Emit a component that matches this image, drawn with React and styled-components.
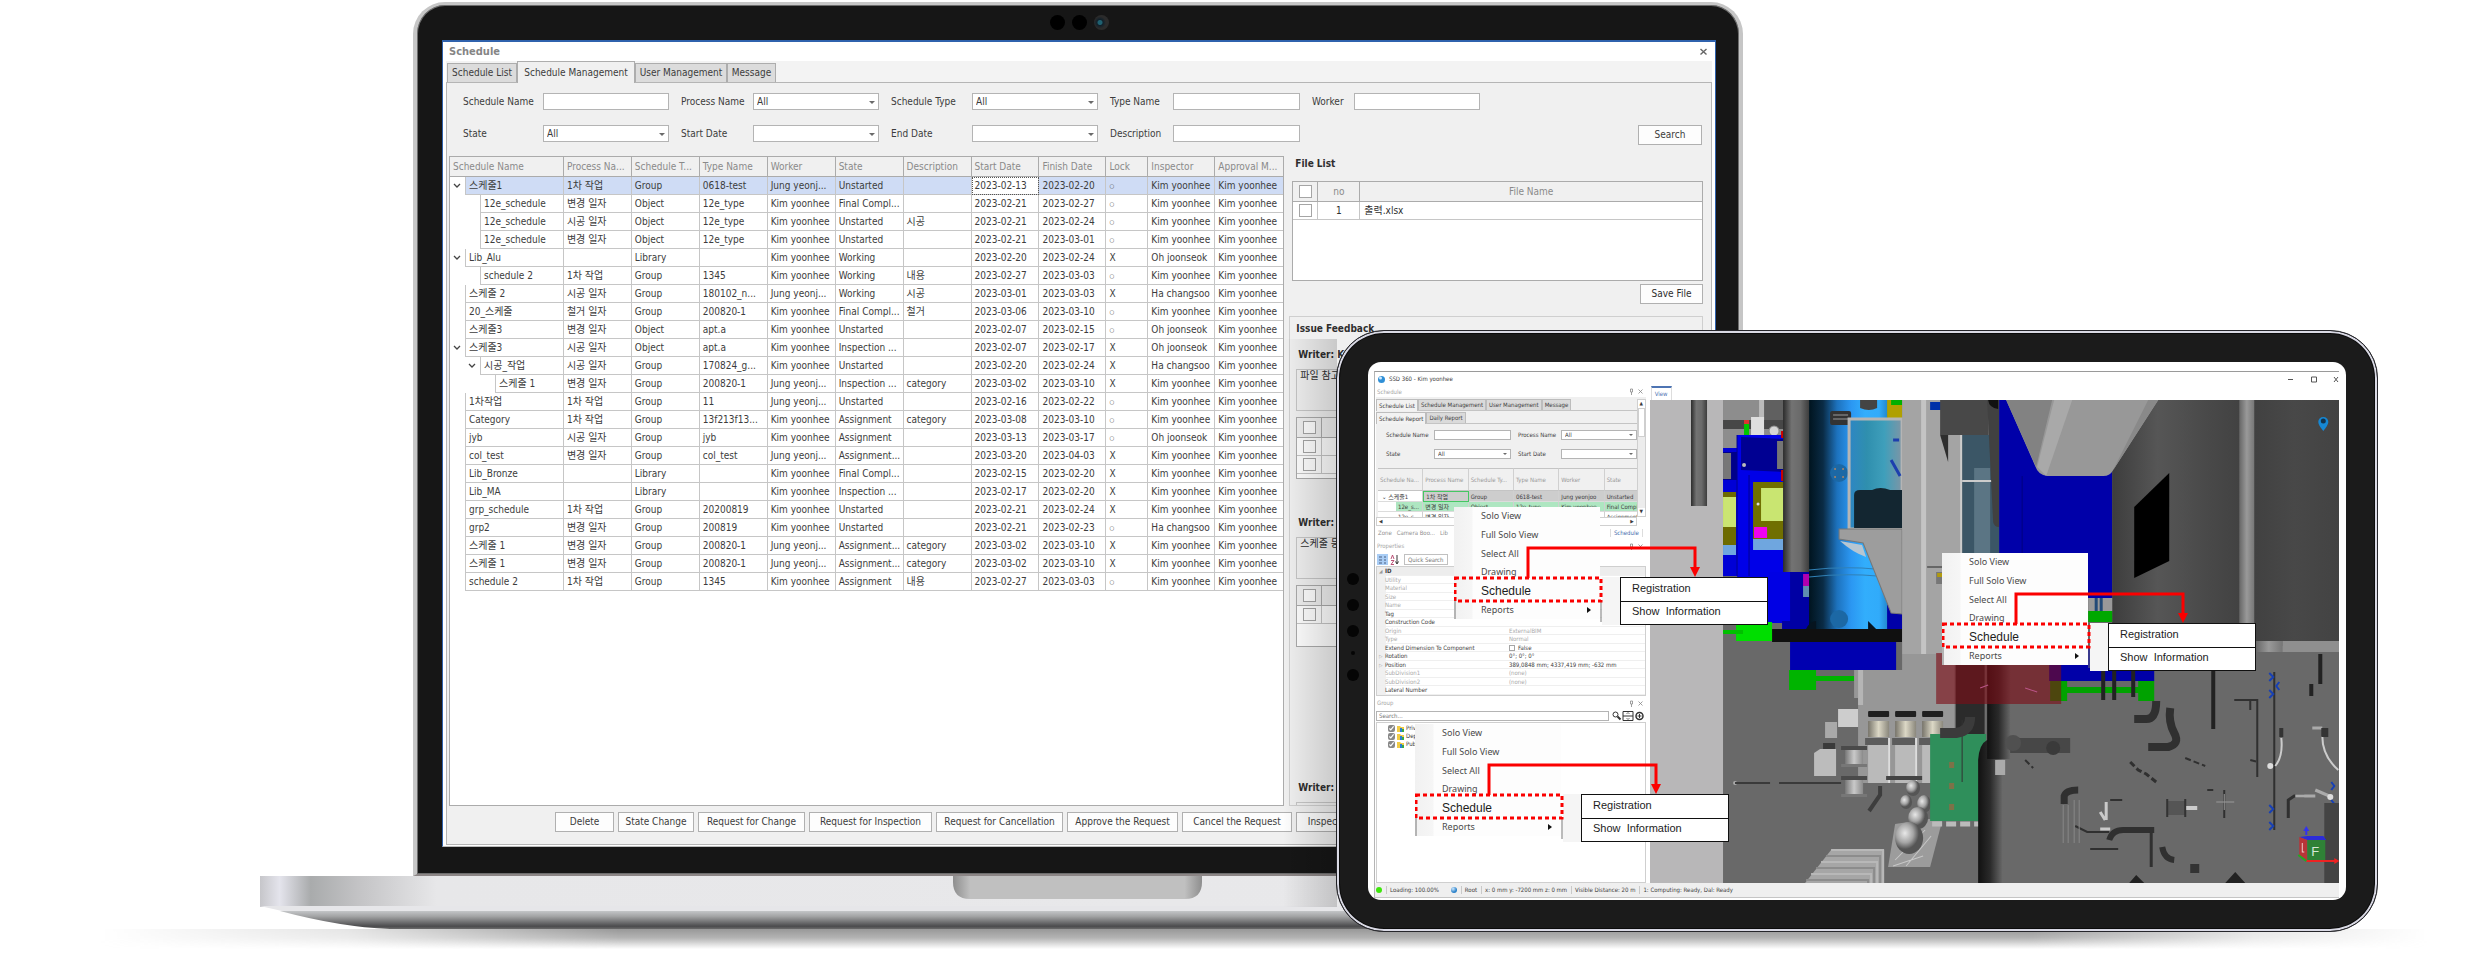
import React, { useId } from "react";
import styled, { createGlobalStyle } from "styled-components";

const uiFont = `"DejaVu Sans Condensed", "DejaVu Sans", "Noto Sans CJK KR", sans-serif`;

const GlobalStyle = createGlobalStyle`
  *, *::before, *::after { box-sizing: border-box; }
  body { margin: 0; background: #fff; color: #3c3c3c; font: 10px/16px ${uiFont}; }
  button, input, select { font: inherit; color: inherit; margin: 0; }
`;

/* ---------- stage ---------- */

const Stage = styled.main`
  display: grid;
  grid-template-columns: 260fr 153fr 923fr 407fr 153fr 482fr 100fr;
  grid-template-rows: auto auto 26px;
  overflow: hidden;
`;

const FloorShadow = styled.div`
  grid-column: 1 / -1;
  grid-row: 3;
  height: 20px;
  background: linear-gradient(#989898, #b4b4b4 45%, rgba(255, 255, 255, 0));
  mask-image: linear-gradient(90deg, transparent 4%, rgba(0, 0, 0, 0.25) 14%, #000 25%, #000 82%, rgba(0, 0, 0, 0.25) 91%, transparent 98%);
`;

/* ---------- laptop ---------- */

const Lid = styled.section`
  grid-column: 3 / 5;
  grid-row: 1;
  min-width: 0;
  margin-top: 2px;
  padding: 0 23px 27px 25px;
  background: #161616;
  border: 4px solid #c6c6c6;
  border-top-width: 3px;
  border-bottom: 2px solid #8c8686;
  border-radius: 32px 32px 0 0;
  box-shadow: inset 0 0 0 1px #6d6d6d;
`;

const CameraBar = styled.div`
  height: 35px;
  display: flex;
  align-items: center;
  justify-content: center;
  gap: 7px;
`;

const Lens = styled.span`
  width: 15px;
  height: 15px;
  border-radius: 50%;
  background: ${(p) => (p.$glass ? "radial-gradient(circle at 40% 50%, #1f6070 0 2px, #10202a 3px, #2b2b2b 6px)" : "#000")};
`;

const Screen = styled.div`
  background: #fff;
  border: 1px solid #2f62ad;
  border-top-width: 2px;
  border-bottom-color: #bbb;
  padding: 0 3px 1px;
`;

const WindowTitle = styled.header`
  height: 19px;
  padding: 0 4px 0 3px;
  display: flex;
  align-items: center;
  justify-content: space-between;
  h1 { margin: 0; font-size: 11px; line-height: 19px; color: #858585; }
`;

const CloseButton = styled.button`
  border: 0;
  padding: 0;
  width: 9px;
  height: 9px;
  background: none;
  display: flex;
`;

const TabStrip = styled.nav`
  display: flex;
  align-items: flex-end;
  height: 21px;
  padding-left: 1px;
  background: #f3f3f3;
`;

const Tab = styled.button`
  height: ${(p) => (p.$active ? 22 : 19)}px;
  width: ${(p) => p.$w}px;
  padding: 0;
  margin-bottom: ${(p) => (p.$active ? -1 : 0)}px;
  background: ${(p) => (p.$active ? "#f0f0f0" : "#dcdcdc")};
  border: 1px solid #adadad;
  border-bottom: 0;
  white-space: nowrap;
  z-index: 1;
`;

const TabPanel = styled.div`
  border: 1px solid #b5b5b5;
  background: #f0f0f0;
  overflow: hidden;
`;

const Filters = styled.form`
  display: grid;
  grid-template-columns: 80px 126px 84px 126px 93px 126px 75px 127px 54px 126px 1fr;
  row-gap: 15px;
  align-items: start;
  padding: 10px 9px 11px 16px;
`;

const FieldLabel = styled.label`
  line-height: 17px;
  padding-left: ${(p) => (p.$first ? 0 : 12)}px;
  white-space: nowrap;
`;

const TextBox = styled.input`
  width: 100%;
  height: ${(p) => p.$h || 17}px;
  border: 1px solid #b4b4b4;
  background: #fff;
  padding: 0 3px;
  outline: 0;
  border-radius: 0;
`;

const SelectWrap = styled.span`
  position: relative;
  display: flex;
  width: 100%;
  &::after {
    content: "";
    position: absolute;
    right: 4px;
    top: 50%;
    margin-top: -1px;
    border: ${(p) => (p.$small ? 2 : 3)}px solid transparent;
    border-top-color: #6a6a6a;
    border-bottom: 0;
  }
  select {
    appearance: none;
    width: 100%;
    height: ${(p) => (p.$small ? 10 : 17)}px;
    border: 1px solid #b4b4b4;
    border-radius: 0;
    background: #fff;
    padding: 0 3px;
  }
`;

const SearchSlot = styled.div`
  grid-column: 11;
  grid-row: 2;
  justify-self: end;
`;

const PushButton = styled.button`
  height: 20px;
  width: ${(p) => p.$w}px;
  flex: none;
  padding: 0;
  background: #fdfdfd;
  border: 1px solid #b0b0b0;
  white-space: nowrap;
`;

const Workspace = styled.div`
  display: grid;
  grid-template-columns: minmax(0, 836fr) minmax(0, 427fr);
  min-height: 650px;
  padding-left: 2px;
`;

const TreePane = styled.div`
  background: #fff;
  border: 1px solid #ababab;
  overflow: hidden;
`;

const TreeTable = styled.table`
  width: 100%;
  table-layout: fixed;
  border-spacing: 0;
  th, td {
    padding: 0 0 0 3px;
    text-align: left;
    font-weight: normal;
    overflow: hidden;
    text-overflow: ellipsis;
    white-space: nowrap;
    border-right: 1px solid #c6c6c6;
    border-bottom: 1px solid #c6c6c6;
  }
  th { height: 20px; background: #f0f0f0; color: #8a8a8a; border-color: #ababab; }
  td { height: 18px; }
  th:last-child, td:last-child { border-right: 0; }
`;

const TreeRow = styled.tr`
  background: ${(p) => (p.$selected ? "#cfdcf5" : "#fff")};
`;

const FocusCell = styled.td`
  background: #fff;
  outline: 1px dotted #555;
  outline-offset: -1px;
`;

const LockCell = styled.td`
  font-size: ${(p) => (p.$ring ? 6 : 10)}px;
`;

const NameCell = styled.td`
  && { padding: 0; border-bottom: 0; }
  background: #fff;
  > div { display: flex; height: 18px; }
`;

const Indent = styled.span`
  flex: none;
  width: ${(p) => 15 + p.$level * 15}px;
  display: flex;
  align-items: center;
  justify-content: flex-end;
  padding-right: 4px;
`;

const NameText = styled.span`
  flex: 1;
  min-width: 0;
  line-height: 17px;
  padding-left: 3px;
  border-left: 1px solid #c6c6c6;
  border-bottom: 1px solid #c6c6c6;
  background: ${(p) => (p.$selected ? "#cfdcf5" : "#fff")};
`;

const SidePane = styled.aside`
  padding: 0 8px 0 5px;
  display: flex;
  flex-direction: column;
  color: #2e2e2e;
`;

const FileSection = styled.section`
  padding-left: 3px;
  display: flex;
  flex-direction: column;
  align-items: flex-end;
  gap: 3px;
  h2 { width: 100%; margin: 0; height: 22px; padding-left: 3px; font-size: 10px; line-height: 16px; }
`;

const FileBox = styled.div`
  width: 100%;
  height: ${(p) => p.$h}px;
  border: 1px solid #ababab;
  background: #fff;
`;

const FileTable = styled.table`
  width: 100%;
  table-layout: fixed;
  border-spacing: 0;
  th, td { padding: 0; height: 18px; border-right: 1px solid #c6c6c6; border-bottom: 1px solid #c6c6c6; font-weight: normal; text-align: center; line-height: 16px; }
  th { height: 20px; background: #f0f0f0; color: #8a8a8a; border-color: #ababab; }
  td:last-child { text-align: left; padding-left: 4px; }
  th:last-child, td:last-child { border-right: 0; }
`;

const Tick = styled.input.attrs({ type: "checkbox" })`
  appearance: none;
  display: block;
  width: ${(p) => p.$s || 13}px;
  height: ${(p) => p.$s || 13}px;
  margin: 0 auto;
  border: 1px solid #a5a5a5;
  background: #fff;
`;

const IssuePanel = styled.section`
  flex: 1 0 0;
  min-height: 0;
  margin-top: 12px;
  padding: 4px 8px 0 6px;
  border: 1px solid #cfcfcf;
  overflow: hidden;
  h2 { margin: 0 0 10px; font-size: 10px; line-height: 16px; }
`;

const Issue = styled.article`
  min-height: ${(p) => p.$h}px;
  h3 { margin: 0 0 6px 2px; font-size: 10px; line-height: 16px; }
  p { margin: 0 0 6px; height: 42px; padding-left: 3px; border: 1px solid #c6c6c6; line-height: 12px; }
`;

const ActionBar = styled.footer`
  display: flex;
  gap: 4px;
  padding: 6px 0 12px 108px;
`;

const BaseArt = styled.svg`
  grid-column: 2 / 6;
  grid-row: 2;
  display: block;
  width: 100%;
  height: 53px;
`;

/* ---------- tablet ---------- */

const Tablet = styled.section`
  grid-column: 4 / 7;
  grid-row: 1 / 4;
  align-self: start;
  position: relative;
  z-index: 2;
  min-width: 0;
  margin-top: 330px;
  padding: 31px 31px 31px 31px;
  background: #1b1b1b;
  border: 1px solid #26262b;
  border-radius: 48px;
  box-shadow: inset 0 0 0 2px #d9d9e4, inset 0 0 0 3px #0b0b0b;
  font-size: 6px;
  line-height: 8px;
  &::before {
    content: "";
    position: absolute;
    z-index: -1;
    left: -54px;
    top: 8px;
    bottom: 24px;
    width: 54px;
    background: linear-gradient(90deg, rgba(0, 0, 0, 0), rgba(0, 0, 0, 0.16));
  }
`;

const Sensors = styled.div`
  position: absolute;
  left: 10px;
  top: 242px;
  display: flex;
  flex-direction: column;
  align-items: center;
  gap: 14px;
  span { width: 12px; height: 12px; border-radius: 50%; background: #050505; }
  span:nth-child(4) { width: 4px; height: 4px; }
`;

const TabletScreen = styled.div`
  background: #fff;
  border-radius: 13px;
  padding: 9px 7px 2px 6px;
`;

const AppWindow = styled.div`
  position: relative;
  border-top: 1px solid #9a9a9a;
  border-left: 1px solid #b5b5b5;
  border-bottom: 1px solid #c5c5c5;
`;

const AppTitle = styled.header`
  display: flex;
  align-items: center;
  gap: 4px;
  height: 14px;
  padding: 0 0 0 3px;
  span { flex: 1; }
  svg:last-child { flex: none; }
`;

const AppMain = styled.div`
  display: grid;
  grid-template-columns: minmax(0, 275fr) minmax(0, 690fr);
`;

const Dock = styled.div`
  padding: 0 4px 0 1px;
  min-width: 0;
`;

const DockTitle = styled.div`
  display: flex;
  justify-content: space-between;
  align-items: center;
  height: ${(p) => p.$h}px;
  padding: 0 3px 0 1px;
  color: #a6a6a6;
  svg { flex: none; }
`;

const SchedPane = styled.div`
  display: flex;
  height: 120px;
  background: #f0f0f0;
`;

const SchedContent = styled.div`
  flex: 1;
  min-width: 0;
  overflow: hidden;
`;

const SmallTabs = styled.nav`
  display: flex;
  align-items: flex-end;
  height: ${(p) => p.$h}px;
  border-bottom: 1px solid #c4c4c4;
`;

const SmallTab = styled.button`
  height: ${(p) => (p.$active ? 12 : 11)}px;
  padding: 0 2px;
  margin-bottom: ${(p) => (p.$active ? -1 : 0)}px;
  border: 1px solid #bdbdbd;
  border-bottom: 0;
  background: ${(p) => (p.$active ? "#f2f2f2" : "#dadada")};
  white-space: nowrap;
`;

const SmallFilters = styled.form`
  display: grid;
  grid-template-columns: 48px 77px 50px 76px;
  row-gap: 9px;
  align-items: center;
  padding: 6px 0 9px 10px;
  label { white-space: nowrap; }
  label:nth-of-type(even) { padding-left: 7px; }
`;

const SmallTable = styled.table`
  width: 272px;
  margin-left: 2px;
  table-layout: fixed;
  border-spacing: 0;
  background: #fff;
  th, td { padding: 0 0 0 2px; text-align: left; font-weight: normal; overflow: hidden; text-overflow: ellipsis; white-space: nowrap; border-right: 1px solid #d0d0d0; }
  th { height: 23px; background: #f0f0f0; color: #999; border-top: 1px solid #c4c4c4; border-bottom: 1px solid #c4c4c4; }
  td { height: 10px; line-height: 9px; border-bottom: 1px solid #dcdcdc; }
`;

const rowTone = { sel: "#cdcdcd", done: "#aee6c1", plain: "#fff" };
const SmallRow = styled.tr`
  background: ${(p) => rowTone[p.$tone]};
  td:first-child { background: ${(p) => (p.$tone === "done" ? "linear-gradient(90deg, #fff 18px, #aee6c1 18px)" : "#fff")}; padding-left: ${(p) => (p.$tone === "sel" ? 4 : 20)}px; }
  td:nth-child(2) { ${(p) => p.$tone === "sel" && "border: 1px solid #45c763;"} }
`;

const ScrollV = styled.div`
  width: 9px;
  margin-top: 2px;
  background: #ececec;
  border: 1px solid #cfcfcf;
  display: flex;
  flex-direction: column;
  justify-content: space-between;
  span { height: 8px; background: #fff; text-align: center; font-size: 5px; line-height: 7px; }
  i { height: 29px; background: #fff; border: 1px solid #cfcfcf; margin-bottom: auto; }
`;

const ScrollH = styled.div`
  display: flex;
  justify-content: space-between;
  height: 9px;
  margin-right: 9px;
  background: #fff;
  border: 1px solid #d0d0d0;
  font-size: 5px;
  line-height: 7px;
  padding: 0 2px;
`;

const DockTabs = styled.div`
  display: flex;
  align-items: center;
  gap: 5px;
  height: 14px;
  padding: 0 3px 0 2px;
  color: #8f8f8f;
  a { margin-left: auto; color: #3f6cab; text-decoration: none; padding: 0 3px; border: solid #ddd; border-width: 0 1px; }
`;

const PropTools = styled.div`
  display: flex;
  align-items: center;
  gap: 5px;
  height: 14px;
  padding-left: 1px;
  input { width: 44px; height: 11px; padding: 0 3px; border: 1px solid #c0c0c0; }
`;

const PropGrid = styled.dl`
  margin: 0;
  height: 130px;
  display: grid;
  grid-template-rows: repeat(15, 1fr);
  border: 1px solid #cfcfcf;
  background: linear-gradient(90deg, #f0f0f0 9px, #fff 9px);
`;

const PropLine = styled.div`
  display: grid;
  grid-template-columns: 8px 122px 1fr;
  align-items: center;
  min-height: 0;
  border-bottom: 1px solid #efefef;
  color: ${(p) => (p.$dim ? "#a9a9a9" : "#3c3c3c")};
  background: ${(p) => (p.$head ? "#ededed" : "none")};
  font-weight: ${(p) => (p.$head ? "bold" : "normal")};
  dt, dd { margin: 0; line-height: 8px; white-space: nowrap; }
  dt { grid-column: 2; }
  dd { display: flex; align-items: center; gap: 3px; padding-left: 2px; }
  > i { font-style: normal; font-size: 5px; line-height: 8px; padding-left: 2px; color: #999; }
  input { margin: 0; }
`;

const GroupSearch = styled.div`
  display: flex;
  align-items: center;
  gap: 3px;
  height: 12px;
  padding: 0 2px 1px 0;
  input { flex: 1; min-width: 0; height: 10px; border: 1px solid #b4b4b4; padding: 0 2px; }
  svg { flex: none; }
`;

const GroupTree = styled.ul`
  height: 161px;
  margin: 0;
  padding: 1px 0 0 11px;
  list-style: none;
  border: 1px solid #cfcfcf;
  li { display: flex; align-items: center; gap: 2px; height: 8px; }
  input { margin: 0; width: 7px; height: 7px; accent-color: #888; }
`;

const ViewPane = styled.div`
  display: flex;
  flex-direction: column;
  min-width: 0;
`;

const ViewTab = styled.button`
  align-self: flex-start;
  height: 14px;
  margin-left: 1px;
  padding: 0 3px;
  border: 1px solid #ddd;
  border-width: 0 1px;
  border-top: 2px solid #4d74b3;
  background: #fff;
  color: #4d74b3;
`;

const Scene = styled.svg`
  display: block;
  width: 100%;
  height: 483px;
`;

const StatusBar = styled.footer`
  display: flex;
  align-items: center;
  height: 14px;
  background: #efefef;
  padding-left: 1px;
  white-space: nowrap;
  span { padding: 0 4px 0 3px; border-left: 1px solid #c9c9c9; }
`;

const Orb = styled.i`
  width: 6px;
  height: 6px;
  margin-right: 4px;
  border-radius: 50%;
  background: ${(p) => (p.$c === "green" ? "#3ee60c" : "radial-gradient(circle at 35% 30%, #cfe9ff, #2c82c9 60%)")};
`;

/* context menu with its sub menu, floating over the application */
const Callout = styled.div`
  position: absolute;
  left: ${(p) => p.$x}px;
  top: ${(p) => p.$y}px;
  width: 314px;
  height: 118px;
  > svg { position: absolute; inset: 0; }
`;

const Menu = styled.div`
  width: 146px;
  height: 112px;
  display: grid;
  grid-template-rows: repeat(6, 1fr);
  background: linear-gradient(90deg, #f1f1f1, #f6f6f6 18px, #fdfdfd 19px);
`;

const MenuItem = styled.button`
  display: flex;
  align-items: center;
  justify-content: space-between;
  border: 0;
  padding: 0 9px 0 27px;
  background: none;
  text-align: left;
  color: ${(p) => (p.$strong ? "#1c1c1c" : "#4a4a4a")};
  font: ${(p) => (p.$strong ? `12px/18px "Liberation Sans", sans-serif` : `9px/18px "Noto Sans", sans-serif`)};
`;

const SubMenu = styled.div`
  position: absolute;
  left: 166px;
  top: 70px;
  width: 148px;
  border: 1px solid #111;
  background: #fff;
  box-shadow: -18px 0 0 #f5f5f5;
  button {
    display: block;
    width: 100%;
    height: 23px;
    border: 0;
    padding: 0 0 3px 11px;
    background: none;
    text-align: left;
    color: #1c1c1c;
    font: 11px/19px "Liberation Sans", sans-serif;
  }
  button + button { border-top: 1px solid #111; }
`;

/* ---------- data ---------- */

const columns = [
  ["Schedule Name", 114], ["Process Na...", 68], ["Schedule T...", 68], ["Type Name", 68], ["Worker", 68], ["State", 68],
  ["Description", 68], ["Start Date", 68], ["Finish Date", 67], ["Lock", 42], ["Inspector", 67], ["Approval M...", 68],
];

const K = "Kim yoonhee", J = "Jung yeonj...", O = "Oh joonseok", H = "Ha changsoo";
const P1 = "1차 작업", P2 = "변경 일자", P3 = "시공 일자", P4 = "철거 일자";
const F = "Final Compl...", I = "Inspection ...", U = "Unstarted", A = "Assignment", AA = "Assignment...", W = "Working";

const rows = [
  [0, 1, "스케줄1", P1, "Group", "0618-test", J, U, "", "02-13", "02-20", "○", K],
  [1, 0, "12e_schedule", P2, "Object", "12e_type", K, F, "", "02-21", "02-27", "○", K],
  [1, 0, "12e_schedule", P3, "Object", "12e_type", K, U, "시공", "02-21", "02-24", "○", K],
  [1, 0, "12e_schedule", P2, "Object", "12e_type", K, U, "", "02-21", "03-01", "○", K],
  [0, 1, "Lib_Alu", "", "Library", "", K, W, "", "02-20", "02-24", "X", O],
  [1, 0, "schedule 2", P1, "Group", "1345", K, W, "내용", "02-27", "03-03", "○", K],
  [0, 0, "스케줄 2", P3, "Group", "180102_n...", J, W, "시공", "03-01", "03-03", "X", H],
  [0, 0, "20_스케줄", P4, "Group", "200820-1", K, F, "철거", "03-06", "03-10", "○", K],
  [0, 0, "스케줄3", P2, "Object", "apt.a", K, U, "", "02-07", "02-15", "○", O],
  [0, 1, "스케줄3", P3, "Object", "apt.a", K, I, "", "02-07", "02-17", "X", O],
  [1, 1, "시공_작업", P3, "Group", "170824_g...", K, U, "", "02-20", "02-24", "X", H],
  [2, 0, "스케줄 1", P2, "Group", "200820-1", J, I, "category", "03-02", "03-10", "X", K],
  [0, 0, "1차작업", P1, "Group", "11", J, U, "", "02-16", "02-22", "○", K],
  [0, 0, "Category", P1, "Group", "13f213f13...", K, A, "category", "03-08", "03-10", "○", K],
  [0, 0, "jyb", P3, "Group", "jyb", K, A, "", "03-13", "03-17", "○", O],
  [0, 0, "col_test", P2, "Group", "col_test", J, AA, "", "03-20", "04-03", "X", K],
  [0, 0, "Lib_Bronze", "", "Library", "", K, F, "", "02-15", "02-20", "X", K],
  [0, 0, "Lib_MA", "", "Library", "", K, I, "", "02-17", "02-20", "X", K],
  [0, 0, "grp_schedule", P1, "Group", "20200819", K, U, "", "02-21", "02-24", "X", K],
  [0, 0, "grp2", P2, "Group", "200819", K, U, "", "02-21", "02-23", "○", H],
  [0, 0, "스케줄 1", P2, "Group", "200820-1", J, AA, "category", "03-02", "03-10", "X", K],
  [0, 0, "스케줄 1", P2, "Group", "200820-1", J, AA, "category", "03-02", "03-10", "X", K],
  [0, 0, "schedule 2", P1, "Group", "1345", K, A, "내용", "02-27", "03-03", "○", K],
];

const actions = [
  ["Delete", 59], ["State Change", 76], ["Request for Change", 107], ["Request for Inspection", 123],
  ["Request for Cancellation", 127], ["Approve the Request", 111], ["Cancel the Request", 110], ["Inspection", 70],
];

const props = [
  ["ID", "", "head", "◢"], ["Utility", "", "dim"], ["Material", "", "dim"], ["Size", "", "dim"], ["Name", "", "dim"], ["Tag", ""],
  ["Construction Code", ""], ["Origin", "ExternalBIM", "dim"], ["Type", "Normal", "dim"], ["Extend Dimension To Component", "False", "check"],
  ["Rotation", "0°; 0°; 0°", "", "▷"], ["Position", "389,0848 mm; 4337,419 mm; -632 mm", "", "▷"],
  ["SubDivision1", "(none)", "dim"], ["SubDivision2", "(none)", "dim"], ["Lateral Number", ""],
];

/* ---------- parts ---------- */

function Field({ label, value, select, first, small }) {
  const id = useId();
  const Label = small ? "label" : FieldLabel;
  const extra = small ? {} : { $first: first };
  return (
    <>
      <Label htmlFor={id} {...extra}>{label}</Label>
      {select ? (
        <SelectWrap $small={small}>
          <select id={id} defaultValue={value}><option value={value}>{value}</option></select>
        </SelectWrap>
      ) : (
        <TextBox id={id} type="text" $h={small ? 10 : 17} />
      )}
    </>
  );
}

const Chevron = () => (
  <svg width="8" height="6" viewBox="0 0 8 6" fill="none" stroke="#444" strokeWidth="1.3"><path d="M1 1l3 3 3-3" /></svg>
);

function ScheduleTree() {
  return (
    <TreeTable>
      <colgroup>{columns.map(([name, w]) => <col key={name} style={{ width: `${(w / 834) * 100}%` }} />)}</colgroup>
      <thead><tr>{columns.map(([name]) => <th key={name}>{name}</th>)}</tr></thead>
      <tbody>
        {rows.map(([level, open, name, proc, kind, type, worker, state, desc, start, end, lock, inspector], i) => {
          const Start = i === 0 ? FocusCell : "td";
          return (
            <TreeRow key={i} $selected={i === 0}>
              <NameCell><div>
                <Indent $level={level}>{open ? <Chevron /> : null}</Indent>
                <NameText $selected={i === 0}>{name}</NameText>
              </div></NameCell>
              <td>{proc}</td><td>{kind}</td><td>{type}</td><td>{worker}</td><td>{state}</td><td>{desc}</td>
              <Start>2023-{start}</Start><td>2023-{end}</td><LockCell $ring={lock === "○"}>{lock}</LockCell><td>{inspector}</td><td>{K}</td>
            </TreeRow>
          );
        })}
      </tbody>
    </TreeTable>
  );
}

function FileRows({ items, head }) {
  return (
    <FileTable>
      <colgroup><col style={{ width: 25 }} /><col style={{ width: 42 }} /><col /></colgroup>
      <thead><tr><th><Tick aria-label="Select all files" /></th><th>{head && "no"}</th><th>{head && "File Name"}</th></tr></thead>
      <tbody>
        {items.map((file, i) => (
          <tr key={i}><td><Tick aria-label="Select file" /></td><td>{file && i + 1}</td><td>{file}</td></tr>
        ))}
      </tbody>
    </FileTable>
  );
}

function LaptopBase() {
  return (
    <BaseArt viewBox="0 0 1636 53" preserveAspectRatio="none" aria-hidden="true">
      <defs>
        <linearGradient id="deck">
          <stop offset="0" stopColor="#c6c6ca" /><stop offset=".012" stopColor="#e4e4ec" /><stop offset=".031" stopColor="#a9abac" />
          <stop offset=".06" stopColor="#c3c3c5" /><stop offset=".108" stopColor="#e7e7e9" /><stop offset="1" stopColor="#e9e9eb" />
        </linearGradient>
        <linearGradient id="belly" x2="0" y2="1">
          <stop offset="0" stopColor="#c3c5c7" /><stop offset=".3" stopColor="#a2a3a4" /><stop offset=".85" stopColor="#4b4b4d" /><stop offset="1" stopColor="#6b6b6b" />
        </linearGradient>
        <linearGradient id="notch">
          <stop offset="0" stopColor="#8e8e8e" /><stop offset=".07" stopColor="#c0c0c0" /><stop offset=".93" stopColor="#c0c0c0" /><stop offset="1" stopColor="#8e8e8e" />
        </linearGradient>
      </defs>
      <rect width="1636" height="31" fill="url(#deck)" />
      <path d="M0 30H1636L1614 35H22Z" fill="#e6e6e9" />
      <path d="M20 35H1616Q1560 53 1506 53H130Q80 51 20 35Z" fill="url(#belly)" />
      <path d="M693 0H942V6Q942 23 925 23H710Q693 23 693 6Z" fill="url(#notch)" />
    </BaseArt>
  );
}

function Laptop() {
  return (
    <Lid>
      <CameraBar><Lens /><Lens /><Lens $glass /></CameraBar>
      <Screen>
        <WindowTitle>
          <h1>Schedule</h1>
          <CloseButton aria-label="Close">
            <svg width="9" height="9" viewBox="0 0 9 9" stroke="#666" strokeWidth="1.4"><path d="M1.500 2l6 5.500M7.500 2l-6 5.500" /></svg>
          </CloseButton>
        </WindowTitle>
        <TabStrip>
          <Tab $w={70}>Schedule List</Tab><Tab $w={118} $active>Schedule Management</Tab><Tab $w={92}>User Management</Tab><Tab $w={49}>Message</Tab>
        </TabStrip>
        <TabPanel>
          <Filters onSubmit={(e) => e.preventDefault()}>
            <Field label="Schedule Name" first />
            <Field label="Process Name" select value="All" />
            <Field label="Schedule Type" select value="All" />
            <Field label="Type Name" />
            <Field label="Worker" />
            <span />
            <Field label="State" select value="All" first />
            <Field label="Start Date" select value="" />
            <Field label="End Date" select value="" />
            <Field label="Description" />
            <SearchSlot><PushButton $w={64}>Search</PushButton></SearchSlot>
          </Filters>
          <Workspace>
            <TreePane><ScheduleTree /></TreePane>
            <SidePane>
              <FileSection>
                <h2>File List</h2>
                <FileBox $h={100}><FileRows head items={["출력.xlsx"]} /></FileBox>
                <PushButton $w={63}>Save File</PushButton>
              </FileSection>
              <IssuePanel>
                <h2>Issue Feedback</h2>
                <Issue $h={168}><h3>Writer: Kim yoonhee</h3><p>파일 참고</p><FileBox $h={62}><FileRows items={["", ""]} /></FileBox></Issue>
                <Issue $h={265}><h3>Writer: Kim yoonhee</h3><p>스케줄 등록</p><FileBox $h={62}><FileRows items={[""]} /></FileBox></Issue>
                <Issue $h={80}><h3>Writer: Kim yoonhee</h3><p /></Issue>
              </IssuePanel>
            </SidePane>
          </Workspace>
          <ActionBar>{actions.map(([t, w]) => <PushButton key={t} $w={w}>{t}</PushButton>)}</ActionBar>
        </TabPanel>
      </Screen>
    </Lid>
  );
}

const DockMarks = () => (
  <svg width="14" height="7" viewBox="0 0 14 7" fill="none" stroke="#888"><path d="M1.500 1h2v3h-2zM2.500 4v3M9.500 1.500l4 4M13.500 1.500l-4 4" strokeWidth=".8" /></svg>
);

function PlantModel() {
  const tube = (id, stops) => (
    <linearGradient id={id}>{stops.map((c, i) => <stop key={i} offset={i / (stops.length - 1)} stopColor={c} />)}</linearGradient>
  );
  return (
    <Scene viewBox="0 0 689 483" preserveAspectRatio="none" role="img" aria-label="Plant model">
      <defs>
        {tube("pipe", ["#2b2b2b", "#737373", "#6a6a6a", "#3d3d3d"])}
        {tube("tank", ["#00141f", "#0a2b45", "#1d72bd", "#2b97f2", "#32aefc", "#31abfa", "#1a70b0"])}
        {tube("glass", ["#2d86c4", "#2f8fae", "#3f9fbb", "#7d95a5"])}
        {tube("wall", ["#3d3d3d", "#565656", "#4a4a4a", "#404040", "#484848", "#434343"])}
        {tube("post", ["#666", "#999", "#777"])}
        {tube("cream", ["#77746a", "#dcd8c6", "#8a877c"])}
        {tube("steel", ["#777", "#c9c9c9", "#8a8a8a"])}
        {tube("dark", ["#111", "#2a2a2a", "#666"])}
        <radialGradient id="ball" cx=".35" cy=".35"><stop offset="0" stopColor="#e8e8e8" /><stop offset=".6" stopColor="#a5a5a5" /><stop offset="1" stopColor="#555" /></radialGradient>
      </defs>
      <rect width="689" height="483" fill="#696969" />
      <rect width="73" height="483" fill="#b8b7b8" />
      <rect x="41" width="16" height="106" fill="url(#pipe)" />
      {/* cabinets on the left */}
      <rect x="73" width="61" height="50" fill="#8d8d8d" /><rect x="114" width="20" height="26" fill="#606060" /><rect x="109" width="5" height="20" fill="#bbb" />
      <rect x="73" y="20" width="61" height="9" fill="#474747" /><rect x="101" y="17" width="13" height="18" fill="#dedede" />
      <rect x="94" y="20" width="5" height="16" fill="#00c800" /><rect x="94" y="20" width="5" height="4" fill="#d33" />
      <circle cx="124" cy="31" r="5" fill="#d5d5d5" stroke="#888" />
      <rect x="73" y="48" width="14" height="128" fill="#0000d6" /><rect x="73" y="52" width="14" height="28" fill="#00008a" /><rect x="73" y="53" width="8" height="26" fill="#777" />
      <rect x="73" y="92" width="13" height="53" fill="#6d6b00" /><rect x="73" y="97" width="13" height="30" fill="#cbe572" /><rect x="73" y="145" width="13" height="10" fill="#6fa6df" />
      <rect x="87" y="35" width="47" height="188" fill="#0000e8" /><path d="M87 35v141M99 75v101" stroke="#000090" />
      <path d="M91 37l43 2v33l-43-2z" fill="#000092" /><rect x="127" y="41" width="7" height="28" fill="#757575" /><rect x="131" y="31" width="3" height="7" fill="#c00" /><rect x="131" y="70" width="3" height="11" fill="#c00" />
      <circle cx="94" cy="65" r="2" fill="#bbb" />
      <rect x="103" y="82" width="31" height="58" fill="#706f00" /><rect x="111" y="88" width="23" height="33" fill="#c9e571" /><circle cx="108" cy="104" r="1.500" fill="#ddd" />
      <rect x="104" y="127" width="13" height="11" fill="#f000f0" /><rect x="103" y="139" width="31" height="11" fill="#6fa6df" />
      <rect x="119" y="172" width="25" height="51" fill="#0000e4" /><path d="M140 172h30v57h-38v-8h8z" fill="#0000a4" />
      <rect x="153" y="174" width="6" height="12" fill="#b000b0" /><rect x="153" y="186" width="6" height="11" fill="#5f8fb0" />
      <rect x="133" width="26" height="172" fill="url(#pipe)" />
      {/* blue tank */}
      <rect x="159" width="84" height="229" fill="url(#tank)" /><path d="M237 12l15 160v57h-15z" fill="#0000a8" />
      <rect x="237" width="15" height="20" fill="#b0a000" /><rect x="241" width="11" height="5" fill="#00b000" />
      <rect x="180" y="11" width="21" height="14" rx="2" fill="#333" /><path d="M183 15h15M183 19h15" stroke="#999" />
      <path d="M210 0h17v8q-8 4-17 0z" fill="#444" />
      <circle cx="189" cy="73" r="9" fill="#1c68a5" /><circle cx="189" cy="219" r="9" fill="#1c68a5" />
      <g fill="#a98569"><circle cx="185" cy="69" r="1" /><circle cx="193" cy="69" r="1" /><circle cx="185" cy="77" r="1" /><circle cx="193" cy="77" r="1" /></g>
      <path d="M159 170q35-4 66-1M159 177q35-4 68-1" stroke="#3181b6" fill="none" />
      <rect x="199" y="19" width="53" height="110" fill="url(#glass)" stroke="#b5b5b5" strokeWidth="3" />
      <path d="M241 60l9 16M243 40h6" stroke="#1d3fae" strokeWidth="3" />
      <path d="M204 95q0-5 6-5h12q8-4 18 0h12v38h-48z" fill="#132631" />
      <path d="M189 129H252V214L241 213 213 143 189 139Z" fill="#9d9d9d" stroke="#777" />
      <path d="M190 141l22 4 4 12q-14-5-26-16z" fill="#b6c6d2" />
      <path d="M122 229h130v13H122z" fill="#101010" /><path d="M156 229q4-8 10-8v8zM218 229v-8l8 8z" fill="#06141f" />
      {/* column and grey panels */}
      <rect x="252" width="60" height="254" fill="#a4a4a4" /><rect x="271" width="5" height="254" fill="#c4c4c4" />
      <path d="M277 167h16" stroke="#666" strokeWidth="2" /><rect x="286" y="172" width="7" height="12" fill="#777" /><rect x="287" y="173" width="5" height="4" fill="#b09a10" />
      <rect x="280" y="2" width="11" height="8" fill="#0030a8" /><rect x="290" width="48" height="35" fill="#484848" /><path d="M290 35h8v27z" fill="#2e2e2e" />
      <rect x="312" y="35" width="37" height="218" fill="#3b5666" /><rect x="324" y="68" width="16" height="90" fill="#5b7584" /><path d="M312 81h30" stroke="#ccc" strokeWidth="2" /><path d="M311 35v218" stroke="#ccc" strokeWidth="2" />
      <path d="M337 0h12v127q-5 0-6-5z" fill="#414141" /><path d="M338 0h10v9q-9-1-10-9z" fill="#111" />
      <rect x="349" width="113" height="198" fill="#0000a9" /><path d="M372 76v122" stroke="#000080" />
      <rect x="462" width="227" height="246" fill="url(#wall)" /><rect x="589" width="15" height="225" fill="url(#post)" />
      <path d="M356 0H508L463 70Q460 76 453 76H397Q388 75 385 66Z" fill="#989898" /><path d="M356 0H402L386 67Z" fill="#828282" /><path d="M404 0h18l-26 76-9-9z" fill="#a9a9a9" /><path d="M498 0h10L463 70z" fill="#898989" />
      <path d="M484 107L519 73V161L484 178Z" fill="#000" />
      <rect x="438" y="198" width="24" height="13" fill="#999" /><path d="M446 198v13M451 198v13" stroke="#224a77" strokeWidth="3" /><rect x="438" y="211" width="24" height="11" fill="#00a800" />
      <rect x="632" y="241" width="57" height="11" fill="#8f8f8f" /><rect x="605" y="241" width="27" height="11" fill="url(#post)" />
      {/* skid below the tank */}
      <rect x="86" y="222" width="36" height="19" fill="#00de00" /><path d="M73 232h20" stroke="#00c000" strokeWidth="4" />
      <rect x="140" y="242" width="106" height="28" fill="#0000b0" />
      <path d="M139 270h27v6h58v-6h22v19h-22v-8h-58v9h-27z" fill="#00b400" />
      {/* feeder cabinets */}
      <path d="M204 270h48v-16h54v129H208V298h-4z" fill="#979797" /><rect x="208" y="270" width="5" height="35" fill="#b5b5b5" />
      <rect x="188" y="309" width="20" height="18" fill="#cdcdcd" /><rect x="175" y="322" width="12" height="16" fill="#a9a9a9" /><path d="M164 353l6-4h16v27h-22z" fill="#bcbcbc" /><rect x="173" y="343" width="12" height="6" fill="#3a3a3a" />
      {[218, 245, 272].map((x) => (
        <g key={x}><rect x={x} y="311" width="21" height="6" rx="1" fill="#202020" /><rect x={x} y="321" width="21" height="16" fill="url(#cream)" /><rect x={x - 3} y="338" width="23" height="7" fill="#5c5c5c" /><rect x={x} y="345" width="20" height="38" fill="#bababa" /><path d={`M${x + 21} 338v45`} stroke="#ddd" strokeWidth="2" /></g>
      ))}
      {[346, 376].map((y) => <g key={y}><rect x="195" y={y + 4} width="18" height="16" fill="url(#steel)" /><rect x="191" y={y} width="26" height="4" fill="#4a4a4a" /><rect x="191" y={y + 18} width="26" height="3" fill="#777" /></g>)}
      <circle cx="85" cy="383" r="2" fill="#aaa" /><path d="M85 383h35M129 383h62" stroke="#3a3a3a" strokeWidth="2" />
      <path d="M245 424l34-5 13 2-12 46h-42z" fill="#9c9c9c" /><path d="M245 460l30-30M243 466l30-10M256 466l25-30" stroke="#c8c8c8" />
      <path d="M236 378h36" stroke="#444" strokeWidth="4" />
      <g fill="url(#ball)"><ellipse cx="263" cy="388" rx="7" ry="8" /><ellipse cx="256" cy="402" rx="6" ry="7" /><ellipse cx="274" cy="404" rx="7" ry="9" /><ellipse cx="268" cy="418" rx="10" ry="11" /><ellipse cx="259" cy="438" rx="14" ry="16" /></g>
      <path d="M219 411l11-16v-9" stroke="#3d3d3d" strokeWidth="4" fill="none" />
      <path d="M181 450h53v33h-79z" fill="#a6a6a6" />
      {[0, 1, 2, 3, 4, 5].map((i) => <path key={i} d={`M${181 - i * 5} ${450 + i * 6}H${233 - i * 3}V483`} stroke={i % 2 ? "#8c8c8c" : "#b8b8b8"} strokeWidth="2" fill="none" />)}
      {/* doors, red zone, green panel */}
      <rect x="305" y="253" width="30" height="82" fill="#2b2b2b" stroke="#777" /><rect x="280" y="334" width="56" height="87" fill="#2f8f5b" />
      <g fill="#7d7248"><rect x="299" y="362" width="5" height="6" /><rect x="299" y="383" width="5" height="6" /><rect x="299" y="404" width="5" height="6" /></g>
      <path d="M312 320v62" stroke="#333" /><path d="M290 333h16q14-2 14-16" stroke="#3b3b3b" strokeWidth="10" fill="none" />
      <path d="M282 424h54" stroke="#bbb" strokeWidth="5" strokeDasharray="10 4" />
      <rect x="399" y="246" width="105" height="35" fill="#0000a8" /><path d="M400 281h17v6h71v-6h16v20h-16v-8h-71v8h-17z" fill="#00a200" />
      <path d="M328 360q1-16 9-20h15v143h-24z" fill="url(#dark)" /><rect x="337" y="256" width="23" height="103" fill="url(#dark)" />
      <rect x="286" y="253" width="125" height="51" fill="#7d0d17" opacity=".62" /><path d="M330 288l8-3M375 288l12 4" stroke="#b58" />
      <rect x="360" y="338" width="60" height="15" fill="#474747" /><circle cx="363" cy="343" r="8" fill="#505050" /><circle cx="403" cy="348" r="7" fill="#3a3a3a" /><rect x="345" y="360" width="10" height="15" fill="#aaa" />
      <g stroke="#222" strokeWidth="4"><path d="M453 269v31M464 269v31M483 269v28" /><path d="M563 269v60M670 254v30M661 284v12" /></g>
      {/* loose pipework */}
      <g fill="none" stroke="#303030" strokeLinecap="butt">
        <path d="M484 319h12q10 0 10-18M520 308q-2 14 4 25t-6 14h-20" strokeWidth="8" />
        <path d="M414 404v-8q2-6 14-6" strokeWidth="7" /><path d="M512 447q2 12 12 13" strokeWidth="6" />
        <path d="M459 440q3-10 14-10h31" strokeWidth="6" /><path d="M501 431v36" strokeWidth="3" />
        <path d="M425 426l12 6h22M606 300h-22M600 310v-10h7v77M624 272v158M574 390v28" strokeWidth="2" />
        <path d="M480 362l8 8 8 4 10 8" strokeWidth="3" strokeDasharray="6 3" />
        <path d="M535 358l20 8M600 360l8 2M375 360l8 8M557 390h7" strokeWidth="2" strokeDasharray="6 3" />
        <path d="M638 418v-18l6-4h10" strokeWidth="3" /><path d="M440 449h28M460 400h12" strokeWidth="2" /><path d="M413 405v38M418 405v38M424 400v43M429 400v43" strokeWidth="1" stroke="#888" />
      </g>
      <rect x="517" y="401" width="18" height="14" fill="#555" /><path d="M517 399v18M535 399v18" stroke="#333" strokeWidth="2" /><path d="M536 408h11" stroke="#ccc" strokeWidth="4" />
      <path d="M566 402h18M574 394v16" stroke="#999" /><path d="M456 402v18M450 412l5 8M450 429h10" stroke="#c9c9c9" strokeWidth="3" fill="none" />
      <path d="M631 338q2 18-6 28M672 336q0 20 16 34" stroke="#ccc" strokeWidth="2" fill="none" /><path d="M662 328h10M645 396h20M665 390l14 6" stroke="#aaa" strokeWidth="3" /><rect x="629" y="328" width="4" height="9" fill="#333" /><rect x="671" y="328" width="7" height="9" fill="#333" />
      <circle cx="620" cy="366" r="3" fill="#ddd" /><circle cx="680" cy="397" r="3" fill="#ddd" />
      <g stroke="#1740b5" strokeWidth="2" fill="none">{[277, 294, 409, 426].map((y) => <path key={y} d={`M619 ${y - 4}l4 4-4 4`} />)}<path d="M629 282l-3 4 3 4M681 382l3 4-3 4M681 400l3 4-3 4" /></g>
      <rect x="674" y="403" width="15" height="80" fill="#444" /><path d="M479 483l7-8 8 8zM575 483l10-11 10 11z" fill="#222" /><rect x="540" y="464" width="9" height="9" fill="#333" />
      {/* orientation cube */}
      <path d="M656 435v-6" stroke="#33e" strokeWidth="2" /><path d="M653 431l3-5 3 5z" fill="#33e" />
      <path d="M649 437l8-1h16l3 4h-19z" fill="#2c2cd8" /><path d="M649 437l8 3v21l-8-5z" fill="#b93438" /><rect x="657" y="440" width="18" height="21" fill="#2f8136" />
      <path d="M652 443v9h2" stroke="#ecc" fill="none" /><text x="661" y="456" fontSize="13" fill="#d7e7d7" fontFamily="Liberation Sans, sans-serif">F</text>
      <path d="M656 461h30" stroke="#e22" strokeWidth="2" /><path d="M684 458l5 3-5 3z" fill="#e22" /><path d="M656 461l-8-6" stroke="#2a2" strokeWidth="2" />
      {/* location pin */}
      <path d="M673 31q-5-6-5-9a5 5 0 0 1 10 0q0 3-5 9z" fill="#1687d3" /><circle cx="673" cy="21" r="2.500" fill="#12324a" />
    </Scene>
  );
}

function MenuCallout({ x, y }) {
  return (
    <Callout $x={x} $y={y}>
      <Menu role="menu">
        <MenuItem>Solo View</MenuItem><MenuItem>Full Solo View</MenuItem><MenuItem>Select All</MenuItem><MenuItem>Drawing</MenuItem>
        <MenuItem $strong>Schedule</MenuItem>
        <MenuItem>Reports<svg width="4" height="6" viewBox="0 0 4 6"><path d="M0 0l4 3-4 3z" fill="#111" /></svg></MenuItem>
      </Menu>
      <SubMenu role="menu"><button>Registration</button><button>Show&nbsp; Information</button></SubMenu>
      <svg width="314" height="118" fill="none" stroke="#fb0000" aria-hidden="true">
        <path d="M1 94v18M147 94v21" stroke="#777" />
        <rect x="1" y="71" width="146" height="23" strokeWidth="3" strokeDasharray="4 3" />
        <path d="M74 71V41H241V61" strokeWidth="3" /><path d="M236 60h10l-5 10z" fill="#fb0000" stroke="none" />
      </svg>
    </Callout>
  );
}

function TabletApp() {
  return (
    <AppWindow>
      <AppTitle>
        <svg width="7" height="7" viewBox="0 0 7 7"><circle cx="3.500" cy="3.500" r="3.500" fill="#2f8fd6" /><circle cx="2.500" cy="2" r="1.500" fill="#cfeaff" /></svg>
        <span>SSD 360 - Kim yoonhee</span>
        <svg width="52" height="8" viewBox="0 0 52 8" fill="none" stroke="#555"><path d="M1 4.500h5M24.500 2h5v5h-5zM47 2l4 5M51 2l-4 5" /></svg>
      </AppTitle>
      <AppMain>
        <Dock>
          <DockTitle $h={11}>Schedule<DockMarks /></DockTitle>
          <SchedPane>
            <SchedContent>
              <SmallTabs $h={14}><SmallTab $active>Schedule List</SmallTab><SmallTab>Schedule Management</SmallTab><SmallTab>User Management</SmallTab><SmallTab>Message</SmallTab></SmallTabs>
              <SmallTabs $h={13}><SmallTab $active>Schedule Report</SmallTab><SmallTab>Daily Report</SmallTab></SmallTabs>
              <SmallFilters>
                <Field small label="Schedule Name" /><Field small label="Process Name" select value="All" />
                <Field small label="State" select value="All" /><Field small label="Start Date" select value="" />
              </SmallFilters>
              <SmallTable>
                <thead><tr><th>Schedule Na...</th><th>Process Name</th><th>Schedule Ty...</th><th>Type Name</th><th>Worker</th><th>State</th></tr></thead>
                <tbody>
                  <SmallRow $tone="sel"><td>⌄ 스케줄1</td><td>1차 작업</td><td>Group</td><td>0618-test</td><td>Jung yeonjoo</td><td>Unstarted</td></SmallRow>
                  <SmallRow $tone="done"><td>12e_s...</td><td>변경 일자</td><td>Object</td><td>12e_type</td><td>Kim yoonhee</td><td>Final Comple</td></SmallRow>
                  <SmallRow $tone="plain"><td>12e_s...</td><td>변경 일자</td><td>Object</td><td>12e_type</td><td>Kim yoonhee</td><td>Assignment</td></SmallRow>
                </tbody>
              </SmallTable>
            </SchedContent>
            <ScrollV><span>▲</span><i /><span>▼</span></ScrollV>
          </SchedPane>
          <ScrollH><span>◀</span><span>▶</span></ScrollH>
          <DockTabs><span>Zone</span><span>Camera Boo...</span><span>Lib</span><a href="#schedule">Schedule</a></DockTabs>
          <DockTitle $h={12}>Properties<DockMarks /></DockTitle>
          <PropTools>
            <svg width="22" height="11" viewBox="0 0 22 11"><rect width="11" height="11" fill="#a9cdf5" /><path d="M2 3h3M2 6h3M2 9h3M7 3h2M7 6h2M7 9h2" stroke="#4a5f80" /><path d="M14 5l1.500-4 1.500 4M14 6.500h3l-3 4h3" stroke="#b3426a" fill="none" strokeWidth=".9" /><path d="M20 1v8M18.500 7.500L20 10l1.500-2.500" stroke="#333" fill="none" /></svg>
            <input type="text" aria-label="Quick search" placeholder="Quick Search" />
          </PropTools>
          <PropGrid>
            {props.map(([name, value, mode, mark]) => (
              <PropLine key={name} $dim={mode === "dim"} $head={mode === "head"}>
                {mark && <i>{mark}</i>}
                <dt>{name}</dt>
                <dd>{mode === "check" && <Tick $s={6} aria-label={name} />}{value}</dd>
              </PropLine>
            ))}
          </PropGrid>
          <DockTitle $h={14}>Group<DockMarks /></DockTitle>
          <GroupSearch>
            <input type="text" aria-label="Search groups" placeholder="Search..." />
            <svg width="32" height="10" viewBox="0 0 32 10" fill="none" stroke="#333"><circle cx="3.500" cy="3.500" r="2.500" /><path d="M5.500 5.500l3 3" strokeWidth="2" /><path d="M11 .5h10v9H11zM11 5h10" /><path d="M14.500 3l1.500-1.500L17.500 3M14.500 7l1.500 1.500L17.500 7" strokeWidth=".7" /><circle cx="27.500" cy="5" r="3.500" strokeWidth="1.500" /><path d="M25.500 5h4M27.500 3v4" /></svg>
          </GroupSearch>
          <GroupTree>
            {["Private", "Department", "Public"].map((t) => (
              <li key={t}><input type="checkbox" id={t} defaultChecked />
                <svg width="7" height="7" viewBox="0 0 7 7"><path d="M0 1h3l1 1h3v5H0z" fill="#f1cb45" /><rect x="3" y="3" width="2" height="4" fill="#2a7fd4" /><rect x="5" y="4" width="2" height="3" fill="#3aa845" /></svg>
                <label htmlFor={t}>{t}</label></li>
            ))}
          </GroupTree>
        </Dock>
        <ViewPane><ViewTab>View</ViewTab><PlantModel /></ViewPane>
      </AppMain>
      <StatusBar>
        <Orb $c="green" /><span>Loading: 100.00%</span><span /><Orb /><span>Root</span><span>x: 0 mm y: -7200 mm z: 0 mm</span><span>Visible Distance: 20 m</span><span>1: Computing: Ready, Dal: Ready</span>
      </StatusBar>
      <MenuCallout x={79} y={135} />
      <MenuCallout x={567} y={181} />
      <MenuCallout x={40} y={352} />
    </AppWindow>
  );
}

export default function App() {
  return (
    <>
      <GlobalStyle />
      <Stage>
        <FloorShadow />
        <Laptop />
        <LaptopBase />
        <Tablet>
          <Sensors><span /><span /><span /><span /><span /></Sensors>
          <TabletScreen><TabletApp /></TabletScreen>
        </Tablet>
      </Stage>
    </>
  );
}
